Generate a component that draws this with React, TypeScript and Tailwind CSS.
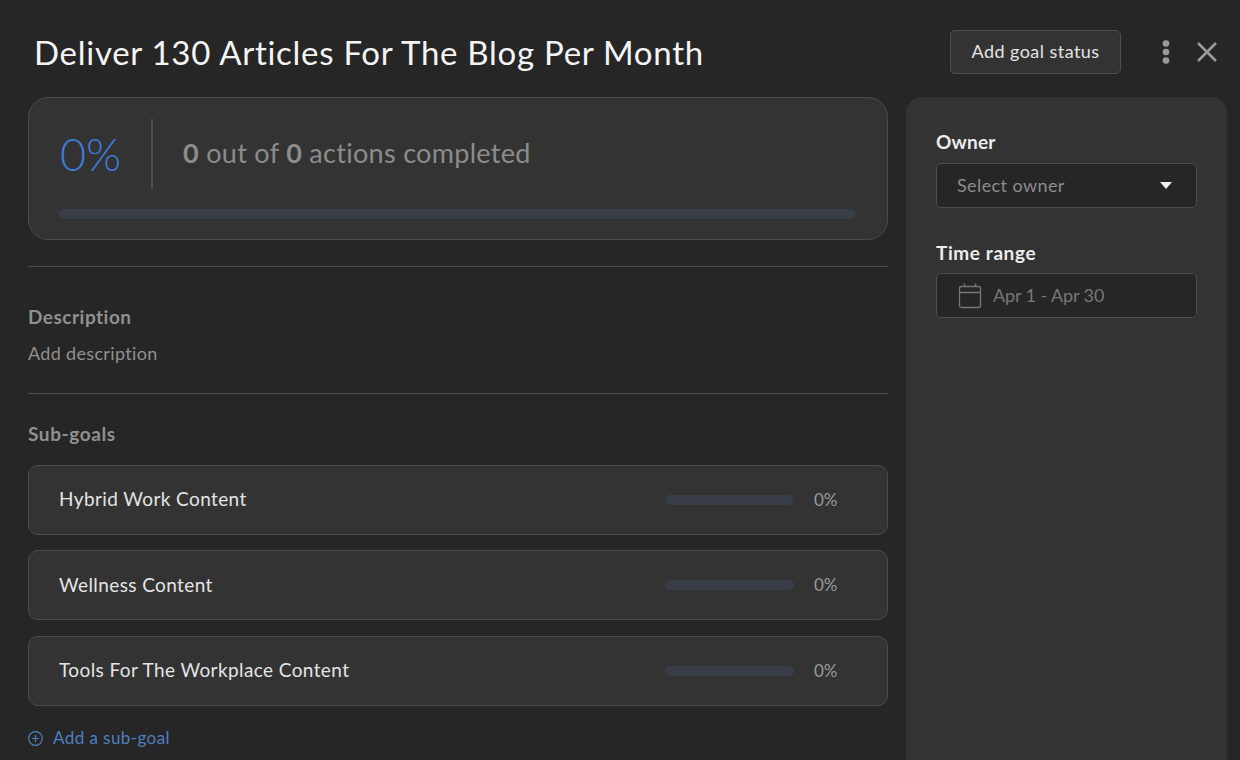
import React from 'react';

const SubGoal = ({ title }: { title: string }) => (
  <div className="h-[70px] rounded-[10px] border border-[#4a4a4a] bg-[#333333] flex items-center pl-[30px] pr-[49px]">
    <span className="flex-1 text-[19px] text-[#e4e4e4] tracking-[0.4px]">{title}</span>
    <div className="w-[129px] h-[10px] rounded-full bg-[#393d47]" />
    <span className="w-[24px] ml-[20px] text-[17px] text-[#9a9a9a]">0%</span>
  </div>
);

const App = () => {
  return (
    <div className="h-[760px] w-full overflow-hidden bg-[#262626] font-['Lato',sans-serif]">
      <header className="h-[97px] flex items-start pl-[34px] pr-[23px]">
        <h1 className="flex-1 mt-[30px] text-[33px] leading-[44px] text-[#f4f4f4] tracking-[0.72px]">
          Deliver 130 Articles For The Blog Per Month
        </h1>
        <button className="mt-[30px] w-[171px] h-[44px] pb-[1px] rounded-[5px] border border-[#4d4d4d] bg-[#333333] text-[18px] text-[#e4e4e4] tracking-[0.45px]">
          Add goal status
        </button>
        <svg className="mt-[40px] ml-[37px]" width="16" height="24" viewBox="0 0 16 24" fill="#9a9a9a">
          <circle cx="8" cy="3.5" r="3.3" />
          <circle cx="8" cy="12" r="3.3" />
          <circle cx="8" cy="20.5" r="3.3" />
        </svg>
        <svg className="mt-[42px] ml-[23px]" width="20" height="20" viewBox="0 0 20 20" stroke="#9a9a9a" strokeWidth="2.6" fill="none">
          <path d="M1 1 L19 19 M19 1 L1 19" />
        </svg>
      </header>

      <div className="flex pl-[28px] pr-[13px]">
        <main className="w-[860px]">
          <section className="h-[143px] rounded-[20px] border border-[#4a4a4a] bg-[#333333] pl-[30px] pr-[31px] pt-[21px]">
            <div className="flex items-center h-[70px]">
              <span className="w-[91px] ml-[1px] text-[45px] font-light text-[#3f7bd8] leading-none">0%</span>
              <div className="w-[2px] h-[70px] bg-[#4f4f4f]" />
              <span className="ml-[30px] mb-[2px] text-[27px] text-[#8c8c8c] tracking-[0.3px]">
                <b className="font-bold">0</b> out of <b className="font-bold">0</b> actions completed
              </span>
            </div>
            <div className="mt-[20px] h-[10px] rounded-full bg-[#393d47]" />
          </section>

          <div className="mt-[26px] border-t border-[#4f4f4f] h-[127px] pt-[37px]">
            <div className="text-[19px] font-bold text-[#909090] leading-[26px] tracking-[0.5px]">Description</div>
            <div className="mt-[11px] text-[18px] text-[#909090] leading-[24px] tracking-[0.33px]">Add description</div>
          </div>

          <div className="border-t border-[#4f4f4f] pt-[27px]">
            <div className="text-[19px] font-bold text-[#909090] leading-[26px] tracking-[0.6px]">Sub-goals</div>
            <div className="mt-[17.5px] flex flex-col gap-[15.5px]">
              <SubGoal title="Hybrid Work Content" />
              <SubGoal title="Wellness Content" />
              <SubGoal title="Tools For The Workplace Content" />
            </div>
            <div className="mt-[20.5px] flex items-center gap-[10px] text-[#4f7fc0]">
              <svg width="15" height="15" viewBox="0 0 15 15" fill="none" stroke="currentColor" strokeWidth="1.2">
                <circle cx="7.5" cy="7.5" r="6.8" />
                <path d="M7.5 4 V11 M4 7.5 H11" />
              </svg>
              <span className="text-[17px] leading-[24px] tracking-[0.43px]">Add a sub-goal</span>
            </div>
          </div>
        </main>

        <aside className="ml-[18px] flex-1 h-[680px] rounded-t-[16px] bg-[#333333] px-[30px] pt-[32px]">
          <div className="text-[19px] font-bold text-[#ececec] leading-[26px] tracking-[0.2px]">Owner</div>
          <div className="mt-[8px] h-[45px] rounded-[5px] border border-[#4d4d4d] bg-[#262626] flex items-center pl-[20px] pr-[24px] text-[18px] text-[#8c8c8c]">
            <span className="flex-1 tracking-[0.4px]">Select owner</span>
            <svg width="12" height="7" viewBox="0 0 12 7" fill="#f0f0f0">
              <path d="M0 0 H12 L6 7 Z" />
            </svg>
          </div>
          <div className="mt-[32px] text-[19px] font-bold text-[#ececec] leading-[26px] tracking-[0.6px]">Time range</div>
          <div className="mt-[7px] h-[45px] rounded-[5px] border border-[#4d4d4d] bg-[#262626] flex items-center pl-[21px] text-[18px] text-[#777777]">
            <svg width="24" height="26" viewBox="0 0 24 26" fill="none" stroke="#777777" strokeWidth="1.3">
              <rect x="1.5" y="3.5" width="21" height="21" rx="2" />
              <path d="M1.5 9.5 H22.5 M6.5 0.5 V3.5 M17.5 0.5 V3.5" />
            </svg>
            <span className="ml-[11px] tracking-[-0.1px]">Apr 1 - Apr 30</span>
          </div>
        </aside>
      </div>
    </div>
  );
};

export default App;
